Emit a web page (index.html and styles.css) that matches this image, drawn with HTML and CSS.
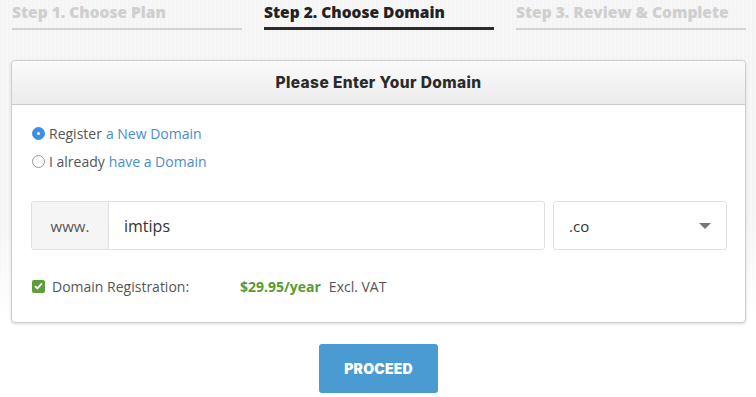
FILE: index.html
```html
<!DOCTYPE html>
<html lang="en">
<head>
  <meta charset="UTF-8" />
  <title>Choose Domain</title>
  <link rel="stylesheet" href="styles.css">
</head>
<body>
  <div class="steps">
    <div class="step">Step 1. Choose Plan</div>
    <div class="step active">Step 2. Choose Domain</div>
    <div class="step">Step 3. Review &amp; Complete</div>
  </div>

  <div class="panel">
    <div class="panel-head">Please Enter Your Domain</div>
    <div class="panel-body">
      <label class="radio-row">
        <span class="radio checked"></span>
        Register <a href="#">a New Domain</a>
      </label>
      <label class="radio-row">
        <span class="radio"></span>
        I already <a href="#">have a Domain</a>
      </label>

      <div class="domain-row">
        <div class="input-group">
          <span class="addon">www.</span>
          <span class="domain-input">imtips</span>
        </div>
        <div class="tld-select">
          <span>.co</span>
          <span class="caret"></span>
        </div>
      </div>

      <div class="reg-row">
        <span class="checkbox">
          <svg width="9" height="8" viewBox="0 0 9 8"><path d="M1 4.2 L3.4 6.4 L8 1.4" fill="none" stroke="#fff" stroke-width="1.8"/></svg>
        </span>
        <span class="reg-label">Domain Registration:</span>
        <span class="price">$29.95/year</span>
        <span class="vat">Excl. VAT</span>
      </div>
    </div>
  </div>

  <div class="actions">
    <button class="proceed">PROCEED</button>
  </div>
</body>
</html>
```

FILE: styles.css
```css
body {
  margin: 0;
  font-family: 'Open Sans', 'Liberation Sans', sans-serif;
  color: #555;
  background:
    linear-gradient(180deg, rgba(255, 255, 255, 0) 0%, rgba(255, 255, 255, 0) 55%, #fff 80%),
    repeating-linear-gradient(90deg, rgba(0, 0, 0, 0.012) 0, rgba(0, 0, 0, 0.012) 2px, transparent 2px, transparent 4px),
    #f7f7f7;
  height: 397px;
  overflow: hidden;
}

/* Pasii de sus */
.steps {
  display: flex;
  gap: 22px;
  padding: 0 10px 0 12px;
}

.step {
  flex: 1;
  font-weight: 800;
  font-size: 15.5px;
  color: #cfcfcf;
  line-height: 20px;
  padding-top: 2px;
  height: 26px;
  border-bottom: 2px solid #d2d2d2;
}

.step.active {
  color: #222;
  border-bottom: 3px solid #2b2b2b;
  height: 25px;
}

.panel {
  margin: 30px 10px 0 11px;
  background: #fff;
  border: 1px solid #cdcdcd;
  border-radius: 4px;
  box-shadow: 0 1px 3px rgba(0, 0, 0, 0.15);
}

.panel-head {
  height: 43px;
  line-height: 44px;
  text-align: center;
  font-family: Inter, 'Liberation Sans', sans-serif;
  font-weight: 800;
  font-size: 15.5px;
  letter-spacing: 0.4px;
  color: #2a2a2a;
  background: linear-gradient(180deg, #fafafa 0%, #ececec 100%);
  border-bottom: 1px solid #cacaca;
  border-radius: 4px 4px 0 0;
}

.panel-body {
  padding: 14px 18px 25px 19px;
}

.radio-row {
  display: flex;
  align-items: center;
  height: 28px;
  font-size: 14px;
  color: #555;
  gap: 4px;
}

.radio-row a {
  color: #4a8cd0;
  text-decoration: none;
}

.radio {
  width: 11px;
  height: 11px;
  border: 1px solid #999;
  border-radius: 50%;
  box-sizing: content-box;
  margin-left: 1px;
  position: relative;
}

.radio.checked {
  background: #3b8fe8;
  border-color: #3b8fe8;
}

.radio.checked::after {
  content: '';
  position: absolute;
  left: 4px;
  top: 4px;
  width: 3px;
  height: 3px;
  border-radius: 50%;
  background: #fff;
}

.domain-row {
  display: flex;
  gap: 8px;
  margin-top: 26px;
}

.input-group {
  flex: 1;
  display: flex;
  height: 47px;
  border: 1px solid #e0e0e0;
  border-radius: 3px;
}

.addon {
  width: 76px;
  background: #f5f5f5;
  border-right: 1px solid #e0e0e0;
  display: flex;
  align-items: center;
  justify-content: center;
  font-size: 15px;
  color: #555;
  border-radius: 3px 0 0 3px;
}

.domain-input {
  display: flex;
  align-items: center;
  padding-left: 15px;
  font-size: 16px;
  color: #333;
}

.tld-select {
  height: 47px;
  border: 1px solid #e0e0e0;
  border-radius: 3px;
  display: flex;
  align-items: center;
  justify-content: space-between;
  padding: 0 15px;
  box-sizing: content-box;
  width: 142px;
  font-size: 15px;
  color: #333;
}

.caret {
  width: 0;
  height: 0;
  border-left: 6px solid transparent;
  border-right: 6px solid transparent;
  border-top: 6px solid #777;
}

.reg-row {
  display: flex;
  align-items: center;
  margin-top: 25px;
  font-size: 14px;
  color: #555;
  height: 22px;
}

.checkbox {
  width: 13px;
  height: 13px;
  background: #5b9e3c;
  border-radius: 2px;
  display: flex;
  align-items: center;
  justify-content: center;
  margin-left: 1px;
}

.reg-label {
  margin-left: 7px;
  width: 188px;
}

.price {
  color: #5a9b2e;
  font-weight: 700;
}

.vat {
  margin-left: 8px;
}

.actions {
  display: flex;
  justify-content: center;
  margin-top: 21px;
}

.proceed {
  width: 119px;
  height: 49px;
  border: none;
  border-radius: 3px;
  background: #4b9bd3;
  color: #fff;
  font-family: Inter, 'Liberation Sans', sans-serif;
  font-weight: 900;
  font-size: 14px;
  letter-spacing: 0.2px;
  margin-left: 1px;
}
```
